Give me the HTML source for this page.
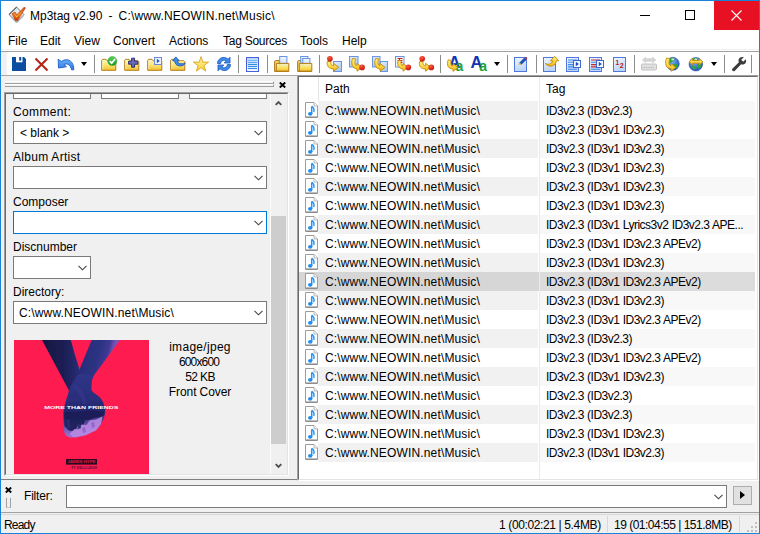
<!DOCTYPE html>
<html>
<head>
<meta charset="utf-8">
<title>Mp3tag</title>
<style>
*{box-sizing:border-box;margin:0;padding:0}
html,body{width:760px;height:534px;overflow:hidden;background:#f0f0f0}
body{font-family:"Liberation Sans",sans-serif;font-size:12px;color:#000;position:relative}
#win *{position:absolute}
#win svg *{position:static}
#win{position:absolute;left:0;top:0;width:760px;height:534px;border:1px solid #1883d7;background:#f0f0f0;overflow:hidden}
.t{white-space:pre;line-height:14px;height:14px}
#title{left:0;top:0;width:758px;height:30px;background:#fff}
#menu{left:0;top:30px;width:758px;height:20px;background:#fff}
#menuline{left:0;top:50px;width:758px;height:1px;background:#a0a0a0}
#tb{left:0;top:51px;width:758px;height:23px;background:#fff}
#tbline{left:0;top:74px;width:758px;height:1px;background:#a8a8a8}
.sep{width:1px;height:18px;top:3px;background:#8c8c8c}
.ic{width:16px;height:16px;top:4px;overflow:visible}
.dd{width:0;height:0;border-left:3.5px solid transparent;border-right:3.5px solid transparent;border-top:4px solid #000;top:10px}
.combo{background:#fff;border:1px solid #7a7a7a;height:23px}
.combo.focus{border-color:#0078d7}
.combo .t{left:6px;top:4px}
.combo .v4{left:5px}
.chev{right:3px;top:8px;width:9px;height:6px}
.lbl{left:12px}
.row{left:0;width:456px;height:19px}
.row .bp{left:19px;top:0;width:220px;height:19px;background:#f1f1f1}
.row .bg{left:241px;top:0;width:215px;height:19px;background:#f8f8f8}
.row.sel .bp{left:0;width:240px;background:#d6d6d6}
.row.sel .bg{left:240px;width:216px;background:#dcdcdc}
.row .p{left:26px;top:3px}
.row .g{left:247px;top:3px;letter-spacing:-0.5px;word-spacing:0.4px}
.row .p,.v4,.tp{letter-spacing:0.15px}
.l0{letter-spacing:0.35px}.l1{letter-spacing:0.28px}
.ci0{letter-spacing:0.3px}.ci1{letter-spacing:-0.85px;margin-left:-1px}.ci2{letter-spacing:-0.6px}.ci3{letter-spacing:-0.1px}
.s0{letter-spacing:-0.8px}.fl{letter-spacing:-0.2px}.s1{letter-spacing:-0.37px}.s2{letter-spacing:-0.5px}
.m5{letter-spacing:-0.25px}
.row svg{left:6px;top:1px;width:13px;height:16px}
</style>
</head>
<body>
<div id="win">
<div id="title">
<svg style="left:7px;top:5px;width:18px;height:18px;overflow:visible" viewBox="0 0 18 18"><defs><linearGradient id="lg1" x1="0" y1="0" x2="1" y2="1"><stop offset="0" stop-color="#c8dcea"/><stop offset="1" stop-color="#ffffff"/></linearGradient><linearGradient id="lg2" x1="0" y1="0" x2="0" y2="1"><stop offset="0" stop-color="#dc4014"/><stop offset="0.5" stop-color="#f08c1c"/><stop offset="1" stop-color="#cc280c"/></linearGradient></defs><path d="M1 8.5L8.6 1L15.9 8.6L8.6 16.2Z" fill="url(#lg1)" stroke="#707070" stroke-width="0.9"/><path d="M1 8.5L8.6 1" stroke="#404040" stroke-width="1" fill="none"/><path d="M2.4 10.6L8.6 17L15.9 9.6" fill="none" stroke="#a0a8b0" stroke-width="0.8"/><path d="M4 7.8L7 6L8.8 8.8L16.4 1L17.4 2L9.6 14.6H7.4Z" fill="url(#lg2)" stroke="#c02c0c" stroke-width="0.6" stroke-linejoin="round"/><path d="M6.4 8.4L8.6 11.6L12 7.4L8.8 10.2Z" fill="#ffd030"/></svg>
<div class="t" id="ttl" style="left:29px;top:8px"><span style="position:static;word-spacing:-0.3px">Mp3tag v2.90  -  </span><span style="position:static;letter-spacing:0.2px">C:\www.NEOWIN.net\Music\</span></div>
<div style="left:639px;top:14px;width:10px;height:1px;background:#000"></div>
<div style="left:684px;top:9px;width:10px;height:10px;border:1px solid #000"></div>
<div style="left:713px;top:0;width:45px;height:29px;background:#e81123">
<svg style="left:17px;top:9px;width:11px;height:11px" viewBox="0 0 11 11"><path d="M0.5 0.5L10.5 10.5M10.5 0.5L0.5 10.5" stroke="#fff" stroke-width="1.1" fill="none"/></svg>
</div>
</div>
<div id="menu">
<div class="t m0" style="left:7px;top:3px">File</div>
<div class="t m1" style="left:39px;top:3px">Edit</div>
<div class="t m2" style="left:73px;top:3px">View</div>
<div class="t m3" style="left:112px;top:3px">Convert</div>
<div class="t m4" style="left:168px;top:3px">Actions</div>
<div class="t m5" style="left:222px;top:3px">Tag Sources</div>
<div class="t m6" style="left:299px;top:3px">Tools</div>
<div class="t m7" style="left:341px;top:3px">Help</div>
<div style="left:0;top:18px;width:758px;height:1px;background:#efefef"></div></div><div id="menuline"></div>
<div id="tb"><div style="left:0;top:0;width:7px;height:23px;background:linear-gradient(90deg,#f0f0f0 70%,#fff)"></div>
<svg class="ic" style="left:10px" viewBox="0 0 16 16"><path d="M1 1H13L15 3V15H1Z" fill="#0c4da2"/><rect x="5" y="1" width="6.5" height="5.3" fill="#fff"/><rect x="8.2" y="1" width="2" height="3.6" fill="#0c4da2"/></svg>
<svg class="ic" style="left:33px" viewBox="0 0 16 16"><path d="M1.5 2.5L13.5 14.5M13.5 2.5L1.5 14.5" stroke="#b3261a" stroke-width="2.1" fill="none"/></svg>
<svg class="ic" style="left:56px" viewBox="0 0 16 16"><defs><linearGradient id="ug" x1="0" y1="0" x2="0" y2="1"><stop offset="0" stop-color="#6ab0f6"/><stop offset="1" stop-color="#2e78e0"/></linearGradient></defs><path d="M1.2 3.2L1.5 12L9.4 10.8L7.2 8.6C10 6.8 13.4 8.8 14.6 13.8L16.8 13.8C17 6 11.4 0.8 4.4 5.4Z" fill="url(#ug)" stroke="#1c5cc8" stroke-width="0.9" stroke-linejoin="round"/></svg>
<div class="dd" style="left:80px"></div>
<div class="sep" style="left:93px"></div>
<svg class="ic" style="left:100px" viewBox="0 0 16 16"><defs><linearGradient id="fg1" x1="0" y1="0" x2="0" y2="1"><stop offset="0" stop-color="#fef7c4"/><stop offset="0.5" stop-color="#fbe57a"/><stop offset="1" stop-color="#f2c02c"/></linearGradient></defs>
<path d="M0.7 14.3V4.3L1.7 3.3H5L6.2 4.8H14L14.8 5.6V14.3Z" fill="url(#fg1)" stroke="#b47c1a" stroke-width="1" stroke-linejoin="round"/>
<path d="M1.6 13.5V5H2.2V13.5Z" fill="#fffbe0"/><defs><linearGradient id="gc" x1="0" y1="0" x2="0" y2="1"><stop offset="0" stop-color="#5cd45c"/><stop offset="1" stop-color="#12941c"/></linearGradient></defs><circle cx="11.3" cy="5.1" r="4.5" fill="url(#gc)" stroke="#1a9a22" stroke-width="0.5"/><path d="M8.8 5.2L10.7 7.2L14 3" stroke="#fff" stroke-width="1.8" fill="none"/></svg>
<svg class="ic" style="left:123px" viewBox="0 0 16 16"><defs><linearGradient id="fg2" x1="0" y1="0" x2="0" y2="1"><stop offset="0" stop-color="#fef7c4"/><stop offset="0.5" stop-color="#fbe57a"/><stop offset="1" stop-color="#f2c02c"/></linearGradient></defs>
<path d="M0.7 14.3V4.3L1.7 3.3H5L6.2 4.8H14L14.8 5.6V14.3Z" fill="url(#fg2)" stroke="#b47c1a" stroke-width="1" stroke-linejoin="round"/>
<path d="M1.6 13.5V5H2.2V13.5Z" fill="#fffbe0"/><path d="M7.6 2.2H10.6V5.2H13.8V8.2H10.6V11.2H7.6V8.2H4.6V5.2H7.6Z" fill="#6a6ab8" stroke="#2c2c78" stroke-width="1" stroke-linejoin="round"/></svg>
<svg class="ic" style="left:146px" viewBox="0 0 16 16"><defs><linearGradient id="fg3" x1="0" y1="0" x2="0" y2="1"><stop offset="0" stop-color="#fef7c4"/><stop offset="0.5" stop-color="#fbe57a"/><stop offset="1" stop-color="#f2c02c"/></linearGradient></defs>
<path d="M0.7 14.3V4.3L1.7 3.3H5L6.2 4.8H14L14.8 5.6V14.3Z" fill="url(#fg3)" stroke="#b47c1a" stroke-width="1" stroke-linejoin="round"/>
<path d="M1.6 13.5V5H2.2V13.5Z" fill="#fffbe0"/><rect x="7.5" y="1.5" width="7" height="7" fill="#eef3ff" stroke="#6f8ad8" stroke-width="1"/><path d="M9.8 2.8L12.8 5L9.8 7.2Z" fill="#1a5cd0"/></svg>
<svg class="ic" style="left:169px" viewBox="0 0 16 16"><defs><linearGradient id="fg4" x1="0" y1="0" x2="0" y2="1"><stop offset="0" stop-color="#fef7c4"/><stop offset="0.5" stop-color="#fbe57a"/><stop offset="1" stop-color="#f2c02c"/></linearGradient></defs>
<path d="M0.7 14.3V4.3L1.7 3.3H5L6.2 4.8H14L14.8 5.6V14.3Z" fill="url(#fg4)" stroke="#b47c1a" stroke-width="1" stroke-linejoin="round"/>
<path d="M1.6 13.5V5H2.2V13.5Z" fill="#fffbe0"/><path d="M2.6 4.8L5.8 0.9L9.2 4.6L7.6 4.8C7.6 7.4 10.5 8.6 15.2 7.2C14.4 10.6 5.2 11.8 4.6 4.9Z" fill="#3f8ce4" stroke="#1a54b8" stroke-width="0.8" stroke-linejoin="round"/><path d="M10 5.2H14V6.6C12.5 7 11 7 10 6.4Z" fill="#fbe57a"/></svg>
<svg class="ic" style="left:192px" viewBox="0 0 16 16"><defs><linearGradient id="sg" x1="0" y1="0" x2="0" y2="1"><stop offset="0" stop-color="#fff6b0"/><stop offset="1" stop-color="#fbd02c"/></linearGradient></defs><path d="M8.0 0.6L9.8 6.1L15.6 6.1L10.9 9.6L12.7 15.1L8.0 11.7L3.3 15.1L5.1 9.6L0.4 6.1L6.2 6.1Z" fill="url(#sg)" stroke="#d9a41c" stroke-width="0.9" stroke-linejoin="round"/></svg>
<svg class="ic" style="left:215px" viewBox="0 0 16 16"><path d="M1.5 7.5C1.5 3.5 5 1 8.5 1.5C10 1.7 11 2.3 12 3.2L14 1.2V7H8.2L10.2 5C8.5 3.6 5.2 4 4.6 7.5Z" fill="#3d8be6" stroke="#1a56c0" stroke-width="0.8" stroke-linejoin="round"/><path d="M14.5 8.5C14.5 12.5 11 15 7.5 14.5C6 14.3 5 13.7 4 12.8L2 14.8V9H7.8L5.8 11C7.5 12.4 10.8 12 11.4 8.5Z" fill="#3d8be6" stroke="#1a56c0" stroke-width="0.8" stroke-linejoin="round"/></svg>
<div class="sep" style="left:237px"></div>
<svg class="ic" style="left:244px" viewBox="0 0 16 16"><defs><linearGradient id="lsg" x1="0" y1="0" x2="0" y2="1"><stop offset="0" stop-color="#b4d6fa"/><stop offset="1" stop-color="#f4f8ff"/></linearGradient></defs><rect x="1.5" y="1.5" width="12" height="14" fill="url(#lsg)" stroke="#4a5ee0" stroke-width="1"/><path d="M3 4.5H12" stroke="#7ab8f4" stroke-width="1"/><path d="M3 6.5H12" stroke="#5aa4f0" stroke-width="1"/><path d="M3 8.5H12M3 10.5H12M3 12.5H12" stroke="#2f8ae8" stroke-width="1"/></svg>
<div class="sep" style="left:266px"></div>
<svg class="ic" style="left:273px" viewBox="0 0 16 16"><defs><linearGradient id="pg1" x1="0" y1="0" x2="0" y2="1"><stop offset="0" stop-color="#fdf6c8" stop-opacity="0.75"/><stop offset="0.45" stop-color="#fbe56c"/><stop offset="1" stop-color="#f4c22c"/></linearGradient><linearGradient id="pq1" x1="0" y1="0" x2="0" y2="1"><stop offset="0" stop-color="#f2f7ff"/><stop offset="1" stop-color="#b8d4f6"/></linearGradient></defs><path d="M0.6 15.3V5.6Q0.6 4.6 1.8 4.6H5.4V15.3Z" fill="#f6d868" stroke="#b07a18" stroke-width="1"/><rect x="5.7" y="0.5" width="7.2" height="11" fill="url(#pq1)" stroke="#6a94e0" stroke-width="1"/><path d="M2.3 15.3V7.4H14.8V15.3Z" fill="url(#pg1)" stroke="#b07a18" stroke-width="1" stroke-linejoin="round"/><path d="M0.6 15.3H14.8" stroke="#b07a18" stroke-width="1"/></svg>
<svg class="ic" style="left:296px" viewBox="0 0 16 16"><defs><linearGradient id="pg2" x1="0" y1="0" x2="0" y2="1"><stop offset="0" stop-color="#fdf6c8" stop-opacity="0.75"/><stop offset="0.45" stop-color="#fbe56c"/><stop offset="1" stop-color="#f4c22c"/></linearGradient><linearGradient id="pq2" x1="0" y1="0" x2="0" y2="1"><stop offset="0" stop-color="#f2f7ff"/><stop offset="1" stop-color="#b8d4f6"/></linearGradient></defs><path d="M0.6 15.3V5.6Q0.6 4.6 1.8 4.6H5.4V15.3Z" fill="#f6d868" stroke="#b07a18" stroke-width="1"/><rect x="3.7" y="0.5" width="7.2" height="10" fill="url(#pq2)" stroke="#6a94e0" stroke-width="1"/><rect x="5.7" y="2.5" width="7.2" height="9" fill="url(#pq2)" stroke="#6a94e0" stroke-width="1"/><path d="M2.3 15.3V7.4H14.8V15.3Z" fill="url(#pg2)" stroke="#b07a18" stroke-width="1" stroke-linejoin="round"/><path d="M0.6 15.3H14.8" stroke="#b07a18" stroke-width="1"/></svg>
<div class="sep" style="left:318px"></div>
<svg class="ic" style="left:325px" viewBox="0 0 16 16"><defs><linearGradient id="yg1" x1="0" y1="0" x2="0" y2="1"><stop offset="0" stop-color="#fff48a"/><stop offset="1" stop-color="#f5b80c"/></linearGradient><radialGradient id="rb1" cx="0.4" cy="0.3" r="0.8"><stop offset="0" stop-color="#ff5a3a"/><stop offset="1" stop-color="#b80c08"/></radialGradient><linearGradient id="sq1" x1="0" y1="0" x2="0.4" y2="1"><stop offset="0" stop-color="#e6f0fd"/><stop offset="1" stop-color="#a9c8f2"/></linearGradient></defs><rect x="7.5" y="5.5" width="8" height="10" fill="url(#sq1)" stroke="#6a94e0" stroke-width="1"/><path d="M1.2 5.6C0.6 10.2 3 12.9 7.6 12.9V15.3L12.6 11.3L7.6 7.3V9.6C5.6 9.6 4.6 8.4 4.9 5.6Z" fill="url(#yg1)" stroke="#c48a08" stroke-width="0.9" stroke-linejoin="round"/><circle cx="3.9" cy="2.8" r="2.8" fill="url(#rb1)"/></svg>
<svg class="ic" style="left:348px" viewBox="0 0 16 16"><defs><linearGradient id="yg2" x1="0" y1="0" x2="0" y2="1"><stop offset="0" stop-color="#fff48a"/><stop offset="1" stop-color="#f5b80c"/></linearGradient><radialGradient id="rb2" cx="0.4" cy="0.3" r="0.8"><stop offset="0" stop-color="#ff5a3a"/><stop offset="1" stop-color="#b80c08"/></radialGradient><linearGradient id="sq2" x1="0" y1="0" x2="0.4" y2="1"><stop offset="0" stop-color="#e6f0fd"/><stop offset="1" stop-color="#a9c8f2"/></linearGradient></defs><rect x="0.5" y="0.5" width="8.5" height="10.5" fill="url(#sq2)" stroke="#6a94e0" stroke-width="1"/><path d="M3.6 2.4C1.4 7.5 3.4 12.8 8 12.8V15.2L13 11.4L8 7.4V9.6C6 9.4 5.2 6.4 6.8 3Z" fill="url(#yg2)" stroke="#c48a08" stroke-width="0.9" stroke-linejoin="round"/><circle cx="13.1" cy="11.4" r="2.8" fill="url(#rb2)"/></svg>
<svg class="ic" style="left:371px" viewBox="0 0 16 16"><defs><linearGradient id="yg3" x1="0" y1="0" x2="0" y2="1"><stop offset="0" stop-color="#fff48a"/><stop offset="1" stop-color="#f5b80c"/></linearGradient><radialGradient id="rb3" cx="0.4" cy="0.3" r="0.8"><stop offset="0" stop-color="#ff5a3a"/><stop offset="1" stop-color="#b80c08"/></radialGradient><linearGradient id="sq3" x1="0" y1="0" x2="0.4" y2="1"><stop offset="0" stop-color="#e6f0fd"/><stop offset="1" stop-color="#a9c8f2"/></linearGradient></defs><rect x="0.5" y="0.5" width="7.5" height="10.5" fill="url(#sq3)" stroke="#6a94e0" stroke-width="1"/><rect x="8.5" y="5.5" width="7" height="10" fill="url(#sq3)" stroke="#6a94e0" stroke-width="1"/><path d="M3.6 2.4C1.4 7.5 3.4 12.8 8 12.8V15.2L13 11.4L8 7.4V9.6C6 9.4 5.2 6.4 6.8 3Z" fill="url(#yg3)" stroke="#c48a08" stroke-width="0.9" stroke-linejoin="round"/></svg>
<svg class="ic" style="left:394px" viewBox="0 0 16 16"><defs><linearGradient id="yg4" x1="0" y1="0" x2="0" y2="1"><stop offset="0" stop-color="#fff48a"/><stop offset="1" stop-color="#f5b80c"/></linearGradient><radialGradient id="rb4" cx="0.4" cy="0.3" r="0.8"><stop offset="0" stop-color="#ff5a3a"/><stop offset="1" stop-color="#b80c08"/></radialGradient><linearGradient id="sq4" x1="0" y1="0" x2="0.4" y2="1"><stop offset="0" stop-color="#e6f0fd"/><stop offset="1" stop-color="#a9c8f2"/></linearGradient></defs><rect x="0.5" y="0.5" width="8.5" height="10.5" fill="#eef4fe" stroke="#6a94e0" stroke-width="1"/><path d="M2.5 2.5H7.5M2.5 4.5H7.5M2.5 6.5H7.5" stroke="#d02018" stroke-width="1"/><path d="M4.5 2V7" stroke="#d02018" stroke-width="1"/><path d="M3.6 4.4C1.4 7.5 3.4 12.8 8 12.8V15.2L13 11.4L8 7.4V9.6C6 9.4 5.2 6.4 6.6 5Z" fill="url(#yg4)" stroke="#c48a08" stroke-width="0.9" stroke-linejoin="round"/><circle cx="13.3" cy="11.4" r="2.8" fill="url(#rb4)"/></svg>
<svg class="ic" style="left:417px" viewBox="0 0 16 16"><defs><linearGradient id="yg5" x1="0" y1="0" x2="0" y2="1"><stop offset="0" stop-color="#fff48a"/><stop offset="1" stop-color="#f5b80c"/></linearGradient><radialGradient id="rb5" cx="0.4" cy="0.3" r="0.8"><stop offset="0" stop-color="#ff5a3a"/><stop offset="1" stop-color="#b80c08"/></radialGradient><linearGradient id="sq5" x1="0" y1="0" x2="0.4" y2="1"><stop offset="0" stop-color="#e6f0fd"/><stop offset="1" stop-color="#a9c8f2"/></linearGradient></defs><path d="M1.6 5.6C0.6 10.2 3 12.9 7.6 12.9V15.3L12.6 11.3L7.6 7.3V9.6C5.6 9.6 4.6 8.4 4.9 5.6Z" fill="url(#yg5)" stroke="#c48a08" stroke-width="0.9" stroke-linejoin="round"/><circle cx="4.2" cy="2.8" r="2.8" fill="url(#rb5)"/><circle cx="13.3" cy="11.4" r="2.8" fill="url(#rb5)"/></svg>
<div class="sep" style="left:439px"></div>
<svg class="ic" style="left:446px" viewBox="0 0 16 16"><text x="1.6" y="11.7" font-family="Liberation Sans,sans-serif" font-weight="bold" font-size="16.5" fill="#1234b4">A</text><text x="8.6" y="15" font-family="Liberation Sans,sans-serif" font-weight="bold" font-size="14" fill="#22a034">a</text><defs><linearGradient id="yg6" x1="0" y1="0" x2="0" y2="1"><stop offset="0" stop-color="#fff48a"/><stop offset="1" stop-color="#f5b80c"/></linearGradient><radialGradient id="rb6" cx="0.4" cy="0.3" r="0.8"><stop offset="0" stop-color="#ff5a3a"/><stop offset="1" stop-color="#b80c08"/></radialGradient><linearGradient id="sq6" x1="0" y1="0" x2="0.4" y2="1"><stop offset="0" stop-color="#e6f0fd"/><stop offset="1" stop-color="#a9c8f2"/></linearGradient></defs><path d="M1.2 3.8C-0.8 9 1.4 13 6 13V15.4L10.8 11.5L6 7.6V9.9C4.2 9.7 3.2 7.4 4.2 4.4Z" fill="url(#yg6)" stroke="#c48a08" stroke-width="0.9" stroke-linejoin="round"/></svg>
<svg class="ic" style="left:469px" viewBox="0 0 16 16"><text x="0.6" y="11.7" font-family="Liberation Sans,sans-serif" font-weight="bold" font-size="16.5" fill="#1234b4">A</text><text x="9.2" y="15" font-family="Liberation Sans,sans-serif" font-weight="bold" font-size="14" fill="#22a034">a</text></svg>
<div class="dd" style="left:493px"></div>
<div class="sep" style="left:506px"></div>
<svg class="ic" style="left:513px" viewBox="0 0 16 16"><defs><linearGradient id="pp1" x1="0" y1="0" x2="0.3" y2="1"><stop offset="0" stop-color="#f2f7ff"/><stop offset="1" stop-color="#bcd5f8"/></linearGradient></defs><rect x="0.5" y="1.5" width="12" height="14" fill="url(#pp1)" stroke="#5078dc" stroke-width="1"/><path d="M5 8.6L5.8 6.4L10.6 1.8L12.4 3.6L7.6 8.2Z" fill="#1c52b8" stroke="#163c90" stroke-width="0.4"/><path d="M10.6 1.8L11.6 0.8L13.4 2.6L12.4 3.6Z" fill="#d82828"/><path d="M4.6 9.2L5.6 6.6L7.4 8.4Z" fill="#f6d050"/></svg>
<div class="sep" style="left:535px"></div>
<svg class="ic" style="left:542px" viewBox="0 0 16 16"><defs><linearGradient id="pp2" x1="0" y1="0" x2="0.3" y2="1"><stop offset="0" stop-color="#f2f7ff"/><stop offset="1" stop-color="#bcd5f8"/></linearGradient></defs><rect x="0.5" y="1.5" width="12" height="14" fill="url(#pp2)" stroke="#5078dc" stroke-width="1"/><defs><linearGradient id="yg7" x1="0" y1="0" x2="0" y2="1"><stop offset="0" stop-color="#fff48a"/><stop offset="1" stop-color="#f5b80c"/></linearGradient><radialGradient id="rb7" cx="0.4" cy="0.3" r="0.8"><stop offset="0" stop-color="#ff5a3a"/><stop offset="1" stop-color="#b80c08"/></radialGradient><linearGradient id="sq7" x1="0" y1="0" x2="0.4" y2="1"><stop offset="0" stop-color="#e6f0fd"/><stop offset="1" stop-color="#a9c8f2"/></linearGradient></defs><path d="M2.2 7.4C5 9 8.6 8.4 9.8 4.8L7.4 4.8L11.6 0.2L15.8 4.8L13.4 4.8C12.8 10.4 6 12.2 2.2 7.4Z" fill="url(#yg7)" stroke="#c48a08" stroke-width="0.9" stroke-linejoin="round"/></svg>
<svg class="ic" style="left:565px" viewBox="0 0 16 16"><defs><linearGradient id="pp3" x1="0" y1="0" x2="0.3" y2="1"><stop offset="0" stop-color="#f2f7ff"/><stop offset="1" stop-color="#bcd5f8"/></linearGradient></defs><rect x="0.5" y="1.5" width="12" height="14" fill="url(#pp3)" stroke="#5078dc" stroke-width="1"/><path d="M2 4H11M2 6.3H7M2 8.6H7M2 10.9H7M2 13.2H11" stroke="#3f8ae6" stroke-width="1.1"/><rect x="7.5" y="4.5" width="7" height="7" fill="#f4f8ff" stroke="#3f66cc" stroke-width="1"/><path d="M9.8 5.8L12.8 8L9.8 10.2Z" fill="#1648c0"/></svg>
<svg class="ic" style="left:588px" viewBox="0 0 16 16"><defs><linearGradient id="pp4" x1="0" y1="0" x2="0.3" y2="1"><stop offset="0" stop-color="#f2f7ff"/><stop offset="1" stop-color="#bcd5f8"/></linearGradient></defs><rect x="0.5" y="1.5" width="12" height="14" fill="url(#pp4)" stroke="#5078dc" stroke-width="1"/><path d="M2 6.3H7M2 13.2H11" stroke="#3f8ae6" stroke-width="1.1"/><path d="M2 4H11M2 8.6H7M2 10.9H7" stroke="#cc2a20" stroke-width="1.1"/><rect x="7.5" y="4.5" width="7" height="7" fill="#f4f8ff" stroke="#3f66cc" stroke-width="1"/><path d="M9.8 5.8L12.8 8L9.8 10.2Z" fill="#1648c0"/></svg>
<svg class="ic" style="left:612px" viewBox="0 0 16 16"><defs><linearGradient id="pp5" x1="0" y1="0" x2="0.3" y2="1"><stop offset="0" stop-color="#f2f7ff"/><stop offset="1" stop-color="#bcd5f8"/></linearGradient></defs><rect x="0.5" y="1.5" width="12" height="14" fill="url(#pp5)" stroke="#5078dc" stroke-width="1"/><text x="2.6" y="9" font-family="Liberation Sans,sans-serif" font-weight="bold" font-size="6.5" fill="#b41818">1</text><text x="6.8" y="12.3" font-family="Liberation Sans,sans-serif" font-weight="bold" font-size="7" fill="#b41818">2</text></svg>
<div class="sep" style="left:633px"></div>
<svg class="ic" style="left:640px" viewBox="0 0 16 16"><path d="M1.4 4L4.6 1.2V2.8H11.6V1.2L14.8 4L11.6 6.8V5.2H4.6V6.8Z" fill="#d6d6d6" stroke="#c6c6c6" stroke-width="0.6"/><rect x="0.5" y="8" width="15" height="6" rx="1" fill="#e0e0e0" stroke="#c2c2c2" stroke-width="1"/><path d="M2.5 11.5H13" stroke="#b4b4b4" stroke-width="1" stroke-dasharray="1.5 1"/></svg>
<svg class="ic" style="left:663px" viewBox="0 0 16 16"><defs><radialGradient id="gg1" cx="0.4" cy="0.3" r="0.75"><stop offset="0" stop-color="#7ab4f6"/><stop offset="1" stop-color="#1a50b8"/></radialGradient></defs><circle cx="8.8" cy="7.8" r="6.5" fill="url(#gg1)" stroke="#1c4496" stroke-width="0.5"/><path d="M5.5 2.6C7.5 1.4 10 1.8 10.6 3.6C10 5.6 8.2 5 7.4 6.8C6 7.4 4.6 5.6 5.5 2.6ZM10 8.2C12 7.2 14.4 8 14 10.4C13.2 12.6 11 13.4 10.2 11.4Z" fill="#34a438"/><ellipse cx="8.8" cy="3.4" rx="1.4" ry="0.9" fill="#d8f0d0"/><defs><linearGradient id="yg8" x1="0" y1="0" x2="0" y2="1"><stop offset="0" stop-color="#fff48a"/><stop offset="1" stop-color="#f5b80c"/></linearGradient><radialGradient id="rb8" cx="0.4" cy="0.3" r="0.8"><stop offset="0" stop-color="#ff5a3a"/><stop offset="1" stop-color="#b80c08"/></radialGradient><linearGradient id="sq8" x1="0" y1="0" x2="0.4" y2="1"><stop offset="0" stop-color="#e6f0fd"/><stop offset="1" stop-color="#a9c8f2"/></linearGradient></defs><path d="M2.6 2C0.2 7 2.2 12.8 7 12.8V15.3L11.8 11.4L7 7.5V9.8C5 9.6 4.2 6 5.8 2.8Z" fill="url(#yg8)" stroke="#c48a08" stroke-width="0.9" stroke-linejoin="round"/></svg>
<svg class="ic" style="left:686px" viewBox="0 0 16 16"><defs><radialGradient id="gg2" cx="0.4" cy="0.3" r="0.75"><stop offset="0" stop-color="#7ab4f6"/><stop offset="1" stop-color="#1a50b8"/></radialGradient></defs><circle cx="8.8" cy="8.2" r="6.8" fill="url(#gg2)" stroke="#1c4496" stroke-width="0.5"/><path d="M5.5 2.6C7.5 1.4 10 1.8 10.6 3.6C10 5.6 8.2 5 7.4 6.8C6 7.4 4.6 5.6 5.5 2.6ZM10 8.2C12 7.2 14.4 8 14 10.4C13.2 12.6 11 13.4 10.2 11.4Z" fill="#34a438"/><ellipse cx="8.8" cy="3.4" rx="1.4" ry="0.9" fill="#d8f0d0"/><path d="M5 10C7 9.4 8.4 10.6 9.4 12C8.6 13.6 6.6 13.8 5.4 12.6Z" fill="#34a438"/><defs><linearGradient id="yg9" x1="0" y1="0" x2="0" y2="1"><stop offset="0" stop-color="#fff48a"/><stop offset="1" stop-color="#f5b80c"/></linearGradient><radialGradient id="rb9" cx="0.4" cy="0.3" r="0.8"><stop offset="0" stop-color="#ff5a3a"/><stop offset="1" stop-color="#b80c08"/></radialGradient><linearGradient id="sq9" x1="0" y1="0" x2="0.4" y2="1"><stop offset="0" stop-color="#e6f0fd"/><stop offset="1" stop-color="#a9c8f2"/></linearGradient></defs><path d="M2.2 5.8L5.6 2.6V4.4H12.4V2.6L15.8 5.8L12.4 9V7.2H5.6V9Z" fill="url(#yg9)" stroke="#c48a08" stroke-width="0.9" stroke-linejoin="round"/></svg>
<div class="dd" style="left:710px"></div>
<div class="sep" style="left:723px"></div>
<svg class="ic" style="left:730px" viewBox="0 0 16 16"><path d="M14.8 3.2L12.2 5.8L10.2 3.8L12.8 1.2C10.8 0.4 8.6 1.2 7.8 3C7.3 4.2 7.4 5.2 7.9 6.2L1.6 12.5C0.9 13.2 0.9 14.2 1.6 14.8C2.2 15.4 3.2 15.4 3.9 14.7L10.1 8.3C11.2 8.8 12.4 8.7 13.4 8.1C15 7.2 15.6 5 14.8 3.2Z" fill="#3c3c3c"/></svg>
<div class="sep" style="left:750px"></div>
</div><div id="tbline"></div>
<div id="lp" style="left:0;top:76px;width:297px;height:403px;background:#f0f0f0">
<div style="left:4px;top:4px;width:269px;height:3px;border-top:1px solid #fff;border-bottom:1px solid #a0a0a0;border-right:1px solid #a0a0a0"></div>
<div style="left:4px;top:7px;width:269px;height:3px;border-top:1px solid #fff;border-bottom:1px solid #a0a0a0;border-right:1px solid #a0a0a0"></div>
<svg style="left:278px;top:5px;width:7px;height:6px" viewBox="0 0 7 6"><path d="M0.8 0.5L6.2 5.5M6.2 0.5L0.8 5.5" stroke="#000" stroke-width="1.9" fill="none"/></svg>
<div id="inner" style="left:3px;top:15px;width:285px;height:384px;border:1px solid #a0a0a0;border-right-color:#fff;border-bottom-color:#fff;overflow:hidden">
<div style="left:8px;top:-3px;width:78px;height:9px;background:#fff;border:1px solid #7a7a7a"></div>
<div style="left:96px;top:-3px;width:78px;height:9px;background:#fff;border:1px solid #7a7a7a"></div>
<div style="left:184px;top:-3px;width:78px;height:9px;background:#fff;border:1px solid #7a7a7a"></div>
<div class="t lbl l0" style="left:8px;top:12px">Comment:</div>
<div class="combo" style="left:8px;top:28px;width:254px"><div class="t v0">&lt; blank &gt;</div><svg class="chev" viewBox="0 0 9 6"><path d="M0.5 0.8L4.5 4.8L8.5 0.8" fill="none" stroke="#444" stroke-width="1.1"/></svg></div>
<div class="t lbl l1" style="left:8px;top:57px">Album Artist</div>
<div class="combo" style="left:8px;top:73px;width:254px"><div class="t v1"></div><svg class="chev" viewBox="0 0 9 6"><path d="M0.5 0.8L4.5 4.8L8.5 0.8" fill="none" stroke="#444" stroke-width="1.1"/></svg></div>
<div class="t lbl l2" style="left:8px;top:102px">Composer</div>
<div class="combo focus" style="left:8px;top:118px;width:254px"><div class="t v2"></div><svg class="chev" viewBox="0 0 9 6"><path d="M0.5 0.8L4.5 4.8L8.5 0.8" fill="none" stroke="#444" stroke-width="1.1"/></svg></div>
<div class="t lbl l3" style="left:8px;top:147px">Discnumber</div>
<div class="combo" style="left:8px;top:163px;width:78px"><div class="t v3"></div><svg class="chev" viewBox="0 0 9 6"><path d="M0.5 0.8L4.5 4.8L8.5 0.8" fill="none" stroke="#444" stroke-width="1.1"/></svg></div>
<div class="t lbl l4" style="left:8px;top:192px">Directory:</div>
<div class="combo" style="left:8px;top:208px;width:254px"><div class="t v4">C:\www.NEOWIN.net\Music\</div><svg class="chev" viewBox="0 0 9 6"><path d="M0.5 0.8L4.5 4.8L8.5 0.8" fill="none" stroke="#444" stroke-width="1.1"/></svg></div>
<svg id="cover" style="left:9px;top:247px;width:135px;height:134px" viewBox="0 0 135 134">
<defs>
<linearGradient id="la" x1="0" y1="0" x2="1" y2="0"><stop offset="0" stop-color="#15173f"/><stop offset="0.55" stop-color="#1d2058"/><stop offset="0.85" stop-color="#2b2c74"/><stop offset="1" stop-color="#4b3a92"/></linearGradient>
<linearGradient id="ra" x1="0" y1="0.1" x2="1" y2="0.35"><stop offset="0" stop-color="#232870"/><stop offset="0.55" stop-color="#2c3282"/><stop offset="0.74" stop-color="#3c3992"/><stop offset="0.83" stop-color="#7450b4"/><stop offset="1" stop-color="#8a5cc8"/></linearGradient>
<linearGradient id="fi" x1="0" y1="0" x2="0" y2="1"><stop offset="0" stop-color="#2f3588"/><stop offset="0.4" stop-color="#2a2e7c"/><stop offset="0.6" stop-color="#23266a"/><stop offset="0.78" stop-color="#5a489c"/><stop offset="1" stop-color="#a274d4"/></linearGradient>
<filter id="bl" x="-5%" y="-5%" width="110%" height="110%"><feGaussianBlur stdDeviation="0.5"/></filter>
</defs>
<rect width="135" height="134" fill="#fd1b50"/>
<g filter="url(#bl)">
<path d="M28 0H56.8L61 15L66 31L72 54H56.5L54.2 49Z" fill="url(#la)"/>
<path d="M77.7 0H105.9L92 19L80.4 34.7L77.7 39.3L77.2 50L58 54L56 50L65.3 30.1Z" fill="url(#ra)"/>
<path d="M63 36C68 32 76 33 79 37C77.5 41 77 46 77.3 50C79 53 83 54.5 85.5 57C88.5 60 90.5 64 91.2 70C91.4 76 89 81 86.5 84.5C85 88 82 90 79 91C75 94.5 70 96 66 96.5C62 97.8 58 97.8 55.5 97.2C52 96 50 94 50 90C49.5 84 49 78 49.5 72C50 66 52 60 54 54.7C55 50 57 44 63 36Z" fill="url(#fi)"/>
<path d="M50 73C54 70.5 60 72.5 64 71.5C70 70.5 78 70.5 90 71L89.5 76C85 77 80 77.5 76 79.5L71 80.5L69 86.5L63.5 85.5L61 91.5L55 90.5L50.5 86Z" fill="#1b1d56" opacity="0.92"/>
<path d="M55.5 94L60.5 89L64.5 89.5L67.5 84.5L72.5 85L75.5 80.5L82 79.5L88.5 76.5L87 84L82 90.5L72 95L60 97.2Z" fill="#b78ae4" opacity="0.9"/>
<path d="M68 88L71 87L72 92L69 93Z M77 83L80 82L81 87L78 88Z" fill="#8e62c4" opacity="0.8"/>
<path d="M52 80L55.5 79L57 88L53.5 89.5Z M63.5 84L66 83.2L67 88L64.5 89Z" fill="#2a2c70"/>
<path d="M60 46C66 50 70 56 71 64" stroke="#3a4096" stroke-width="4" fill="none" opacity="0.35"/>
</g>
<text x="30.2" y="69" font-family="Liberation Sans,sans-serif" font-weight="bold" font-size="4.3" fill="#fff" textLength="74.2" lengthAdjust="spacingAndGlyphs">MORE THAN FRIENDS</text>
<rect x="52" y="119" width="31" height="5.6" fill="#2a0a1e"/>
<text x="53.5" y="123.4" font-family="Liberation Sans,sans-serif" font-weight="bold" font-size="4" fill="#e0184a" textLength="28" lengthAdjust="spacingAndGlyphs">JAMES HYPE</text>
<text x="57.5" y="129" font-family="Liberation Sans,sans-serif" font-weight="bold" font-size="2.6" fill="#5a1030" textLength="25.4" lengthAdjust="spacingAndGlyphs">FT. KELLI-LEIGH</text>
</svg>
<div class="t ci0" style="left:145px;top:247px;width:100px;text-align:center">image/jpeg</div>
<div class="t ci1" style="left:145px;top:262px;width:100px;text-align:center">600x600</div>
<div class="t ci2" style="left:145px;top:277px;width:100px;text-align:center">52 KB</div>
<div class="t ci3" style="left:145px;top:292px;width:100px;text-align:center">Front Cover</div>
<div id="sb" style="left:265px;top:1px;width:17px;height:380px;background:#f0f0f0"><div style="left:0;top:0;width:1px;height:380px;background:#fbfbfb"></div>
<svg style="left:5px;top:6px;width:7px;height:6px" viewBox="0 0 7 6"><path d="M0.7 4.8L3.5 2L6.3 4.8" fill="none" stroke="#505050" stroke-width="1.9"/></svg>
<div style="left:1px;top:122px;width:15px;height:228px;background:#cdcdcd"></div>
<svg style="left:5px;top:369px;width:7px;height:6px" viewBox="0 0 7 6"><path d="M0.7 1.2L3.5 4L6.3 1.2" fill="none" stroke="#505050" stroke-width="1.9"/></svg>
</div>
<div style="left:0;top:0;width:283px;height:382px;border:1px solid #696969;border-right-color:#e3e3e3;border-bottom-color:#e3e3e3"></div>
</div>
<div style="left:0;top:402px;width:297px;height:1px;background:#808080"></div>
</div>
<div id="listo" style="left:296px;top:74px;width:462px;height:406px;border:1px solid #a0a0a0;border-right-color:#fff;border-bottom-color:#fff"></div>
<div id="list" style="left:297px;top:75px;width:460px;height:404px;background:#fff;border:1px solid #696969;border-right-color:#e3e3e3;border-bottom-color:#e3e3e3;overflow:hidden">
<div class="t hp" style="left:26px;top:5px">Path</div><div class="t hg" style="left:247px;top:5px">Tag</div>
<div style="left:19px;top:0;width:1px;height:24px;background:#e5e5e5"></div>
<div style="left:240px;top:0;width:1px;height:402px;background:#e6ebf2;z-index:2"></div>
<div class="row odd" style="top:24px"><div class="bp"></div><div class="bg"></div><svg viewBox="0 0 13 16"><path d="M0.5 0.5H9L12.5 4V15.2H0.5Z" fill="#fff" stroke="#9c9c9c" stroke-width="1"/><path d="M0.5 15.2H12.5" stroke="#787878" stroke-width="1"/><path d="M9 0.5V4H12.5" fill="#f4f4f4" stroke="#a8a8a8" stroke-width="0.8"/><path d="M6.7 4.4V12" stroke="#2394f2" stroke-width="1.5"/><path d="M6.7 4.4C8.6 5.6 9.6 7.4 8.7 10" fill="none" stroke="#2394f2" stroke-width="1.4"/><ellipse cx="5.2" cy="11.8" rx="2.2" ry="1.9" fill="#1f8ef0"/></svg><div class="t p">C:\www.NEOWIN.net\Music\</div><div class="t g g1">ID3v2.3 (ID3v2.3)</div></div>
<div class="row" style="top:43px"><svg viewBox="0 0 13 16"><path d="M0.5 0.5H9L12.5 4V15.2H0.5Z" fill="#fff" stroke="#9c9c9c" stroke-width="1"/><path d="M0.5 15.2H12.5" stroke="#787878" stroke-width="1"/><path d="M9 0.5V4H12.5" fill="#f4f4f4" stroke="#a8a8a8" stroke-width="0.8"/><path d="M6.7 4.4V12" stroke="#2394f2" stroke-width="1.5"/><path d="M6.7 4.4C8.6 5.6 9.6 7.4 8.7 10" fill="none" stroke="#2394f2" stroke-width="1.4"/><ellipse cx="5.2" cy="11.8" rx="2.2" ry="1.9" fill="#1f8ef0"/></svg><div class="t p">C:\www.NEOWIN.net\Music\</div><div class="t g g2">ID3v2.3 (ID3v1 ID3v2.3)</div></div>
<div class="row odd" style="top:62px"><div class="bp"></div><div class="bg"></div><svg viewBox="0 0 13 16"><path d="M0.5 0.5H9L12.5 4V15.2H0.5Z" fill="#fff" stroke="#9c9c9c" stroke-width="1"/><path d="M0.5 15.2H12.5" stroke="#787878" stroke-width="1"/><path d="M9 0.5V4H12.5" fill="#f4f4f4" stroke="#a8a8a8" stroke-width="0.8"/><path d="M6.7 4.4V12" stroke="#2394f2" stroke-width="1.5"/><path d="M6.7 4.4C8.6 5.6 9.6 7.4 8.7 10" fill="none" stroke="#2394f2" stroke-width="1.4"/><ellipse cx="5.2" cy="11.8" rx="2.2" ry="1.9" fill="#1f8ef0"/></svg><div class="t p">C:\www.NEOWIN.net\Music\</div><div class="t g g2">ID3v2.3 (ID3v1 ID3v2.3)</div></div>
<div class="row" style="top:81px"><svg viewBox="0 0 13 16"><path d="M0.5 0.5H9L12.5 4V15.2H0.5Z" fill="#fff" stroke="#9c9c9c" stroke-width="1"/><path d="M0.5 15.2H12.5" stroke="#787878" stroke-width="1"/><path d="M9 0.5V4H12.5" fill="#f4f4f4" stroke="#a8a8a8" stroke-width="0.8"/><path d="M6.7 4.4V12" stroke="#2394f2" stroke-width="1.5"/><path d="M6.7 4.4C8.6 5.6 9.6 7.4 8.7 10" fill="none" stroke="#2394f2" stroke-width="1.4"/><ellipse cx="5.2" cy="11.8" rx="2.2" ry="1.9" fill="#1f8ef0"/></svg><div class="t p">C:\www.NEOWIN.net\Music\</div><div class="t g g2">ID3v2.3 (ID3v1 ID3v2.3)</div></div>
<div class="row odd" style="top:100px"><div class="bp"></div><div class="bg"></div><svg viewBox="0 0 13 16"><path d="M0.5 0.5H9L12.5 4V15.2H0.5Z" fill="#fff" stroke="#9c9c9c" stroke-width="1"/><path d="M0.5 15.2H12.5" stroke="#787878" stroke-width="1"/><path d="M9 0.5V4H12.5" fill="#f4f4f4" stroke="#a8a8a8" stroke-width="0.8"/><path d="M6.7 4.4V12" stroke="#2394f2" stroke-width="1.5"/><path d="M6.7 4.4C8.6 5.6 9.6 7.4 8.7 10" fill="none" stroke="#2394f2" stroke-width="1.4"/><ellipse cx="5.2" cy="11.8" rx="2.2" ry="1.9" fill="#1f8ef0"/></svg><div class="t p">C:\www.NEOWIN.net\Music\</div><div class="t g g2">ID3v2.3 (ID3v1 ID3v2.3)</div></div>
<div class="row" style="top:119px"><svg viewBox="0 0 13 16"><path d="M0.5 0.5H9L12.5 4V15.2H0.5Z" fill="#fff" stroke="#9c9c9c" stroke-width="1"/><path d="M0.5 15.2H12.5" stroke="#787878" stroke-width="1"/><path d="M9 0.5V4H12.5" fill="#f4f4f4" stroke="#a8a8a8" stroke-width="0.8"/><path d="M6.7 4.4V12" stroke="#2394f2" stroke-width="1.5"/><path d="M6.7 4.4C8.6 5.6 9.6 7.4 8.7 10" fill="none" stroke="#2394f2" stroke-width="1.4"/><ellipse cx="5.2" cy="11.8" rx="2.2" ry="1.9" fill="#1f8ef0"/></svg><div class="t p">C:\www.NEOWIN.net\Music\</div><div class="t g g2">ID3v2.3 (ID3v1 ID3v2.3)</div></div>
<div class="row odd" style="top:138px"><div class="bp"></div><div class="bg"></div><svg viewBox="0 0 13 16"><path d="M0.5 0.5H9L12.5 4V15.2H0.5Z" fill="#fff" stroke="#9c9c9c" stroke-width="1"/><path d="M0.5 15.2H12.5" stroke="#787878" stroke-width="1"/><path d="M9 0.5V4H12.5" fill="#f4f4f4" stroke="#a8a8a8" stroke-width="0.8"/><path d="M6.7 4.4V12" stroke="#2394f2" stroke-width="1.5"/><path d="M6.7 4.4C8.6 5.6 9.6 7.4 8.7 10" fill="none" stroke="#2394f2" stroke-width="1.4"/><ellipse cx="5.2" cy="11.8" rx="2.2" ry="1.9" fill="#1f8ef0"/></svg><div class="t p">C:\www.NEOWIN.net\Music\</div><div class="t g g4">ID3v2.3 (ID3v1 Lyrics3v2 ID3v2.3 APE...</div></div>
<div class="row" style="top:157px"><svg viewBox="0 0 13 16"><path d="M0.5 0.5H9L12.5 4V15.2H0.5Z" fill="#fff" stroke="#9c9c9c" stroke-width="1"/><path d="M0.5 15.2H12.5" stroke="#787878" stroke-width="1"/><path d="M9 0.5V4H12.5" fill="#f4f4f4" stroke="#a8a8a8" stroke-width="0.8"/><path d="M6.7 4.4V12" stroke="#2394f2" stroke-width="1.5"/><path d="M6.7 4.4C8.6 5.6 9.6 7.4 8.7 10" fill="none" stroke="#2394f2" stroke-width="1.4"/><ellipse cx="5.2" cy="11.8" rx="2.2" ry="1.9" fill="#1f8ef0"/></svg><div class="t p">C:\www.NEOWIN.net\Music\</div><div class="t g g3">ID3v2.3 (ID3v1 ID3v2.3 APEv2)</div></div>
<div class="row odd" style="top:176px"><div class="bp"></div><div class="bg"></div><svg viewBox="0 0 13 16"><path d="M0.5 0.5H9L12.5 4V15.2H0.5Z" fill="#fff" stroke="#9c9c9c" stroke-width="1"/><path d="M0.5 15.2H12.5" stroke="#787878" stroke-width="1"/><path d="M9 0.5V4H12.5" fill="#f4f4f4" stroke="#a8a8a8" stroke-width="0.8"/><path d="M6.7 4.4V12" stroke="#2394f2" stroke-width="1.5"/><path d="M6.7 4.4C8.6 5.6 9.6 7.4 8.7 10" fill="none" stroke="#2394f2" stroke-width="1.4"/><ellipse cx="5.2" cy="11.8" rx="2.2" ry="1.9" fill="#1f8ef0"/></svg><div class="t p">C:\www.NEOWIN.net\Music\</div><div class="t g g2">ID3v2.3 (ID3v1 ID3v2.3)</div></div>
<div class="row sel" style="top:195px"><div class="bp"></div><div class="bg"></div><svg viewBox="0 0 13 16"><path d="M0.5 0.5H9L12.5 4V15.2H0.5Z" fill="#fff" stroke="#9c9c9c" stroke-width="1"/><path d="M0.5 15.2H12.5" stroke="#787878" stroke-width="1"/><path d="M9 0.5V4H12.5" fill="#f4f4f4" stroke="#a8a8a8" stroke-width="0.8"/><path d="M6.7 4.4V12" stroke="#2394f2" stroke-width="1.5"/><path d="M6.7 4.4C8.6 5.6 9.6 7.4 8.7 10" fill="none" stroke="#2394f2" stroke-width="1.4"/><ellipse cx="5.2" cy="11.8" rx="2.2" ry="1.9" fill="#1f8ef0"/></svg><div class="t p">C:\www.NEOWIN.net\Music\</div><div class="t g g3">ID3v2.3 (ID3v1 ID3v2.3 APEv2)</div></div>
<div class="row odd" style="top:214px"><div class="bp"></div><div class="bg"></div><svg viewBox="0 0 13 16"><path d="M0.5 0.5H9L12.5 4V15.2H0.5Z" fill="#fff" stroke="#9c9c9c" stroke-width="1"/><path d="M0.5 15.2H12.5" stroke="#787878" stroke-width="1"/><path d="M9 0.5V4H12.5" fill="#f4f4f4" stroke="#a8a8a8" stroke-width="0.8"/><path d="M6.7 4.4V12" stroke="#2394f2" stroke-width="1.5"/><path d="M6.7 4.4C8.6 5.6 9.6 7.4 8.7 10" fill="none" stroke="#2394f2" stroke-width="1.4"/><ellipse cx="5.2" cy="11.8" rx="2.2" ry="1.9" fill="#1f8ef0"/></svg><div class="t p">C:\www.NEOWIN.net\Music\</div><div class="t g g2">ID3v2.3 (ID3v1 ID3v2.3)</div></div>
<div class="row" style="top:233px"><svg viewBox="0 0 13 16"><path d="M0.5 0.5H9L12.5 4V15.2H0.5Z" fill="#fff" stroke="#9c9c9c" stroke-width="1"/><path d="M0.5 15.2H12.5" stroke="#787878" stroke-width="1"/><path d="M9 0.5V4H12.5" fill="#f4f4f4" stroke="#a8a8a8" stroke-width="0.8"/><path d="M6.7 4.4V12" stroke="#2394f2" stroke-width="1.5"/><path d="M6.7 4.4C8.6 5.6 9.6 7.4 8.7 10" fill="none" stroke="#2394f2" stroke-width="1.4"/><ellipse cx="5.2" cy="11.8" rx="2.2" ry="1.9" fill="#1f8ef0"/></svg><div class="t p">C:\www.NEOWIN.net\Music\</div><div class="t g g3">ID3v2.3 (ID3v1 ID3v2.3 APEv2)</div></div>
<div class="row odd" style="top:252px"><div class="bp"></div><div class="bg"></div><svg viewBox="0 0 13 16"><path d="M0.5 0.5H9L12.5 4V15.2H0.5Z" fill="#fff" stroke="#9c9c9c" stroke-width="1"/><path d="M0.5 15.2H12.5" stroke="#787878" stroke-width="1"/><path d="M9 0.5V4H12.5" fill="#f4f4f4" stroke="#a8a8a8" stroke-width="0.8"/><path d="M6.7 4.4V12" stroke="#2394f2" stroke-width="1.5"/><path d="M6.7 4.4C8.6 5.6 9.6 7.4 8.7 10" fill="none" stroke="#2394f2" stroke-width="1.4"/><ellipse cx="5.2" cy="11.8" rx="2.2" ry="1.9" fill="#1f8ef0"/></svg><div class="t p">C:\www.NEOWIN.net\Music\</div><div class="t g g1">ID3v2.3 (ID3v2.3)</div></div>
<div class="row" style="top:271px"><svg viewBox="0 0 13 16"><path d="M0.5 0.5H9L12.5 4V15.2H0.5Z" fill="#fff" stroke="#9c9c9c" stroke-width="1"/><path d="M0.5 15.2H12.5" stroke="#787878" stroke-width="1"/><path d="M9 0.5V4H12.5" fill="#f4f4f4" stroke="#a8a8a8" stroke-width="0.8"/><path d="M6.7 4.4V12" stroke="#2394f2" stroke-width="1.5"/><path d="M6.7 4.4C8.6 5.6 9.6 7.4 8.7 10" fill="none" stroke="#2394f2" stroke-width="1.4"/><ellipse cx="5.2" cy="11.8" rx="2.2" ry="1.9" fill="#1f8ef0"/></svg><div class="t p">C:\www.NEOWIN.net\Music\</div><div class="t g g3">ID3v2.3 (ID3v1 ID3v2.3 APEv2)</div></div>
<div class="row odd" style="top:290px"><div class="bp"></div><div class="bg"></div><svg viewBox="0 0 13 16"><path d="M0.5 0.5H9L12.5 4V15.2H0.5Z" fill="#fff" stroke="#9c9c9c" stroke-width="1"/><path d="M0.5 15.2H12.5" stroke="#787878" stroke-width="1"/><path d="M9 0.5V4H12.5" fill="#f4f4f4" stroke="#a8a8a8" stroke-width="0.8"/><path d="M6.7 4.4V12" stroke="#2394f2" stroke-width="1.5"/><path d="M6.7 4.4C8.6 5.6 9.6 7.4 8.7 10" fill="none" stroke="#2394f2" stroke-width="1.4"/><ellipse cx="5.2" cy="11.8" rx="2.2" ry="1.9" fill="#1f8ef0"/></svg><div class="t p">C:\www.NEOWIN.net\Music\</div><div class="t g g2">ID3v2.3 (ID3v1 ID3v2.3)</div></div>
<div class="row" style="top:309px"><svg viewBox="0 0 13 16"><path d="M0.5 0.5H9L12.5 4V15.2H0.5Z" fill="#fff" stroke="#9c9c9c" stroke-width="1"/><path d="M0.5 15.2H12.5" stroke="#787878" stroke-width="1"/><path d="M9 0.5V4H12.5" fill="#f4f4f4" stroke="#a8a8a8" stroke-width="0.8"/><path d="M6.7 4.4V12" stroke="#2394f2" stroke-width="1.5"/><path d="M6.7 4.4C8.6 5.6 9.6 7.4 8.7 10" fill="none" stroke="#2394f2" stroke-width="1.4"/><ellipse cx="5.2" cy="11.8" rx="2.2" ry="1.9" fill="#1f8ef0"/></svg><div class="t p">C:\www.NEOWIN.net\Music\</div><div class="t g g1">ID3v2.3 (ID3v2.3)</div></div>
<div class="row odd" style="top:328px"><div class="bp"></div><div class="bg"></div><svg viewBox="0 0 13 16"><path d="M0.5 0.5H9L12.5 4V15.2H0.5Z" fill="#fff" stroke="#9c9c9c" stroke-width="1"/><path d="M0.5 15.2H12.5" stroke="#787878" stroke-width="1"/><path d="M9 0.5V4H12.5" fill="#f4f4f4" stroke="#a8a8a8" stroke-width="0.8"/><path d="M6.7 4.4V12" stroke="#2394f2" stroke-width="1.5"/><path d="M6.7 4.4C8.6 5.6 9.6 7.4 8.7 10" fill="none" stroke="#2394f2" stroke-width="1.4"/><ellipse cx="5.2" cy="11.8" rx="2.2" ry="1.9" fill="#1f8ef0"/></svg><div class="t p">C:\www.NEOWIN.net\Music\</div><div class="t g g1">ID3v2.3 (ID3v2.3)</div></div>
<div class="row" style="top:347px"><svg viewBox="0 0 13 16"><path d="M0.5 0.5H9L12.5 4V15.2H0.5Z" fill="#fff" stroke="#9c9c9c" stroke-width="1"/><path d="M0.5 15.2H12.5" stroke="#787878" stroke-width="1"/><path d="M9 0.5V4H12.5" fill="#f4f4f4" stroke="#a8a8a8" stroke-width="0.8"/><path d="M6.7 4.4V12" stroke="#2394f2" stroke-width="1.5"/><path d="M6.7 4.4C8.6 5.6 9.6 7.4 8.7 10" fill="none" stroke="#2394f2" stroke-width="1.4"/><ellipse cx="5.2" cy="11.8" rx="2.2" ry="1.9" fill="#1f8ef0"/></svg><div class="t p">C:\www.NEOWIN.net\Music\</div><div class="t g g2">ID3v2.3 (ID3v1 ID3v2.3)</div></div>
<div class="row odd" style="top:366px"><div class="bp"></div><div class="bg"></div><svg viewBox="0 0 13 16"><path d="M0.5 0.5H9L12.5 4V15.2H0.5Z" fill="#fff" stroke="#9c9c9c" stroke-width="1"/><path d="M0.5 15.2H12.5" stroke="#787878" stroke-width="1"/><path d="M9 0.5V4H12.5" fill="#f4f4f4" stroke="#a8a8a8" stroke-width="0.8"/><path d="M6.7 4.4V12" stroke="#2394f2" stroke-width="1.5"/><path d="M6.7 4.4C8.6 5.6 9.6 7.4 8.7 10" fill="none" stroke="#2394f2" stroke-width="1.4"/><ellipse cx="5.2" cy="11.8" rx="2.2" ry="1.9" fill="#1f8ef0"/></svg><div class="t p">C:\www.NEOWIN.net\Music\</div><div class="t g g2">ID3v2.3 (ID3v1 ID3v2.3)</div></div>
</div>
<div id="filter" style="left:0;top:479px;width:758px;height:33px">
<svg style="left:4px;top:7px;width:7px;height:6px" viewBox="0 0 7 6"><path d="M0.8 0.5L6.2 5.5M6.2 0.5L0.8 5.5" stroke="#000" stroke-width="1.9" fill="none"/></svg>
<div style="left:5px;top:18px;width:5px;height:10px;border-left:1px solid #a0a0a0;border-right:1px solid #a0a0a0;border-bottom:1px solid #c8c8c8"></div>
<div class="t fl" style="left:23px;top:9px">Filter:</div>
<div class="combo" style="left:65px;top:5px;width:661px;height:23px"><svg class="chev" viewBox="0 0 9 6"><path d="M0.5 0.8L4.5 4.8L8.5 0.8" fill="none" stroke="#444" stroke-width="1.1"/></svg></div>
<div style="left:732px;top:6px;width:19px;height:19px;background:#e1e1e1;border:1px solid #adadad"><div style="left:6px;top:4px;width:0;height:0;border-top:4.5px solid transparent;border-bottom:4.5px solid transparent;border-left:5px solid #000"></div></div>
</div>
<div id="status" style="left:0;top:511px;width:758px;height:21px;border-top:1px solid #a0a0a0">
<div class="t s0" style="left:3px;top:5px">Ready</div>
<div style="left:0;top:1px;width:758px;height:1px;background:#d9d9d9"></div>
<div class="t s1" style="left:498px;top:5px">1 (00:02:21 | 5.4MB)</div>
<div style="left:606px;top:3px;width:1px;height:16px;background:#d7d7d7"></div>
<div class="t s2" style="left:613px;top:5px">19 (01:04:55 | 151.8MB)</div>
<div style="left:738px;top:3px;width:1px;height:16px;background:#d7d7d7"></div>
<svg style="left:745px;top:8px;width:12px;height:12px" viewBox="0 0 12 12"><path d="M9 1h2v2h-2zM9 5h2v2h-2zM9 9h2v2h-2zM5 5h2v2h-2zM5 9h2v2h-2zM1 9h2v2h-2z" fill="#bfbfbf"/></svg>
</div>
</div>
</body>
</html>
